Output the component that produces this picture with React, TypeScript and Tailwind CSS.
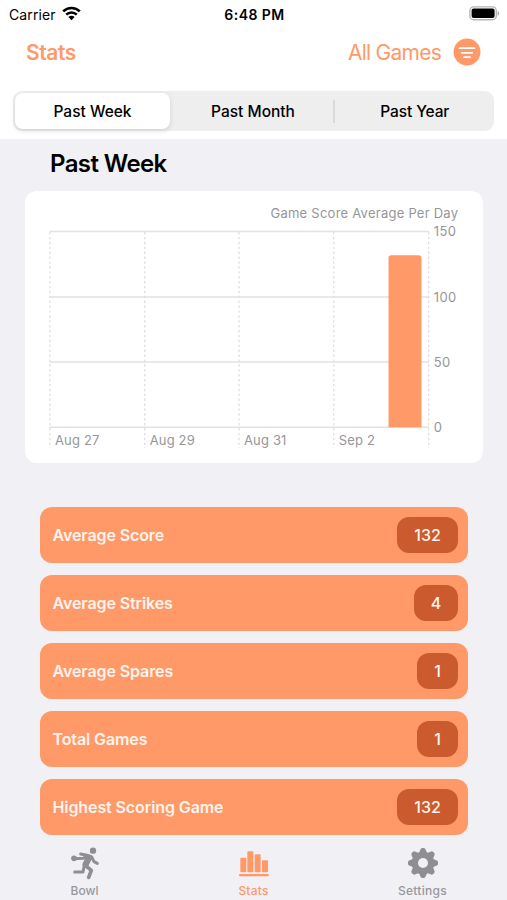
import React from "react";

const rows = [
  { label: "Average Score", value: "132", pill: "w-[61px]" },
  { label: "Average Strikes", value: "4", pill: "w-[44px]" },
  { label: "Average Spares", value: "1", pill: "w-[41px]" },
  { label: "Total Games", value: "1", pill: "w-[41px]" },
  { label: "Highest Scoring Game", value: "132", pill: "w-[61px]" },
];

const verticals = [50, 144.7, 239, 333.8, 428.7];
const horizontals = [
  { y: 231.5, label: "150" },
  { y: 297, label: "100" },
  { y: 362, label: "50" },
  { y: 427.3, label: "0" },
];
const days = ["Aug 27", "Aug 29", "Aug 31", "Sep 2"];

function StatusBar() {
  return (
    <div className="grid h-7 grid-cols-[1fr_auto_1fr] items-center pr-[7px] pl-[9px] text-[14px] text-black">
      <div className="flex items-center gap-[6px]">
        <span className="tracking-[0.1px]">Carrier</span>
        <svg className="-mt-[2px]" width="19" height="15" viewBox="0 0 19 15" fill="none" stroke="#000">
          <path d="M1.2 5.4a11.8 11.8 0 0 1 16.6 0" strokeWidth="2.7" />
          <path d="M4.2 8.6a7.5 7.5 0 0 1 10.6 0" strokeWidth="2.5" />
          <path d="M9.5 14.3 6.4 11.1a4.4 4.4 0 0 1 6.2 0Z" fill="#000" stroke="none" />
        </svg>
      </div>
      <span className="text-center text-[14px] font-semibold tracking-[0.45px]">6:48 PM</span>
      <svg className="-mt-[2px] justify-self-end" width="31" height="15" viewBox="0 0 31 15">
        <rect x="0.9" y="0.9" width="26.4" height="12.8" rx="3.8" fill="#fff" stroke="#b5b5b5" strokeWidth="1.4" />
        <rect x="2.6" y="2.5" width="23" height="9.6" rx="2" fill="#000" />
        <path d="M28.6 5v4.8c2-.6 2-4.2 0-4.8Z" fill="#aaa" />
      </svg>
    </div>
  );
}

function Chart() {
  return (
    <svg className="h-[272px] w-[458px] rounded-xl bg-white" viewBox="25 191 458 272">
      <g stroke="#e2e2e3" strokeWidth="1.4">
        {horizontals.map((h) => (
          <line key={h.label} x1="49.5" x2="429" y1={h.y} y2={h.y} />
        ))}
      </g>
      <g stroke="#dcdcdd" strokeWidth="1.2" strokeDasharray="2.4 2.5">
        {verticals.map((x) => (
          <line key={x} x1={x} x2={x} y1="232" y2="448" />
        ))}
      </g>
      <path d="M388.5 427.3V258a2.8 2.8 0 0 1 2.8-2.7h27.4a2.8 2.8 0 0 1 2.8 2.7v169.3Z" fill="#ff9968" />
      <g fill="#969698" fontSize="13">
        <text x="458" y="218.3" textAnchor="end" textLength="187.5">Game Score Average Per Day</text>
        {horizontals.map((h) => (
          <text key={h.label} x="433.8" y={h.y + 4.8} letterSpacing="0.35">{h.label}</text>
        ))}
        {days.map((d, i) => (
          <text key={d} x={verticals[i] + 5} y="445" letterSpacing="0.15">{d}</text>
        ))}
      </g>
    </svg>
  );
}

function BowlIcon() {
  return (
    <svg width="30" height="34" viewBox="90 46 90 102" fill="none" stroke="#8e8e93" strokeLinecap="round" strokeLinejoin="round">
      <circle cx="159" cy="60" r="9.5" fill="#8e8e93" stroke="none" />
      <circle cx="102" cy="83" r="8.5" fill="#8e8e93" stroke="none" />
      <path d="M102 84 130 83 140 77" strokeWidth="9" />
      <path d="M122 70 141 74 155 79 162 93 172 98" strokeWidth="9" />
      <path d="M147 81 137 101" strokeWidth="19" />
      <path d="M133 104 129 124 104 124" strokeWidth="9" />
      <path d="M138 106 154 119 146 140" strokeWidth="11" />
    </svg>
  );
}

function StatsIcon() {
  return (
    <svg width="30" height="26" viewBox="86 62 90 78" fill="#ff9968">
      <rect x="90" y="82" width="18" height="44" rx="3" />
      <rect x="111" y="63" width="18" height="63" rx="3" />
      <rect x="133" y="72" width="18" height="54" rx="3" />
      <rect x="155" y="90" width="18" height="36" rx="3" />
      <rect x="86" y="131" width="90" height="7" rx="3" />
    </svg>
  );
}

function GearIcon() {
  return (
    <svg width="30" height="30" viewBox="-45 -45 90 90">
      <g fill="#8e8e93">
        {[0, 45, 90, 135, 180, 225, 270, 315].map((a) => (
          <path key={a} transform={`rotate(${a})`} d="M-13 -28 -8 -40Q-7 -45 -2 -45H2Q7 -45 8 -40L13 -28Z" />
        ))}
        <path fillRule="evenodd" d="M0-34a34 34 0 1 0 0 68a34 34 0 1 0 0-68ZM0-15a15 15 0 1 1 0 30a15 15 0 1 1 0-30Z" />
      </g>
    </svg>
  );
}

export default function App() {
  return (
    <div className="flex h-[900px] w-[507px] flex-col overflow-hidden bg-[#f1f0f5] font-['Inter',sans-serif]">
      <header className="h-[139px] bg-white">
        <StatusBar />
        <div className="flex h-12 items-center justify-between px-[26px] text-[21px] text-[#ff9968]">
          <span className="pt-[2px] font-semibold tracking-[-0.4px]">Stats</span>
          <div className="flex items-center gap-3">
            <span className="pt-[2px] tracking-[-0.75px]">All Games</span>
            <svg width="28" height="28" viewBox="0 0 28 28">
              <circle cx="14" cy="14" r="13.5" fill="#ff9968" />
              <path d="M6.5 10.2h15M8.8 14.8h10.4M11 19.2h6" stroke="#fff" strokeWidth="1.8" strokeLinecap="round" />
            </svg>
          </div>
        </div>
        <div className="mx-[13px] mt-[15px] flex h-[40px] items-center rounded-[9px] bg-[#eeeeef] p-[2px] text-center text-[15.5px] font-medium text-black">
          <div className="flex h-9 w-[155px] items-center justify-center rounded-lg bg-white pt-[2px] shadow-[0_2px_5px_rgba(0,0,0,0.12)]">Past Week</div>
          <div className="w-[163px] pt-[2px] pl-[3px]">Past Month</div>
          <div className="h-[23px] w-[1.5px] bg-[#dadadc]" />
          <div className="flex-1 pt-[2px] pl-[3px] tracking-[-0.1px]">Past Year</div>
        </div>
      </header>

      <main className="h-[697px] overflow-hidden">
        <h1 className="flex h-[52px] items-center pb-[3px] pl-[50px] text-[24px] font-semibold tracking-[-0.6px] text-black">Past Week</h1>
        <div className="pl-[25px]">
          <Chart />
        </div>
        <div className="mt-[44px] flex flex-col gap-3 pr-[39px] pl-[40px]">
          {rows.map((r) => (
            <div key={r.label} className="flex h-[56px] items-center justify-between rounded-xl bg-[#ff9968] pr-[10px] pl-[12.5px] text-[16px] text-[#fff4ec]">
              <span className="font-semibold tracking-[-0.1px]">{r.label}</span>
              <span className={`flex h-9 items-center justify-center rounded-xl bg-[#cb5b2e] font-medium ${r.pill}`}>{r.value}</span>
            </div>
          ))}
        </div>
      </main>

      <nav className="grid h-[64px] grid-cols-3 text-[12px] font-medium text-[#97979c]">
        <div className="flex flex-col items-center justify-end">
          <div className="flex h-[36px] items-center pb-[2px]"><BowlIcon /></div>
          <span className="leading-[18px]">Bowl</span>
        </div>
        <div className="flex flex-col items-center justify-end text-[#ff9968]">
          <div className="flex h-[36px] items-center"><StatsIcon /></div>
          <span className="leading-[18px] tracking-[0.2px]">Stats</span>
        </div>
        <div className="flex flex-col items-center justify-end">
          <div className="flex h-[36px] items-center pb-[2px]"><GearIcon /></div>
          <span className="leading-[18px] tracking-[0.3px]">Settings</span>
        </div>
      </nav>
    </div>
  );
}
